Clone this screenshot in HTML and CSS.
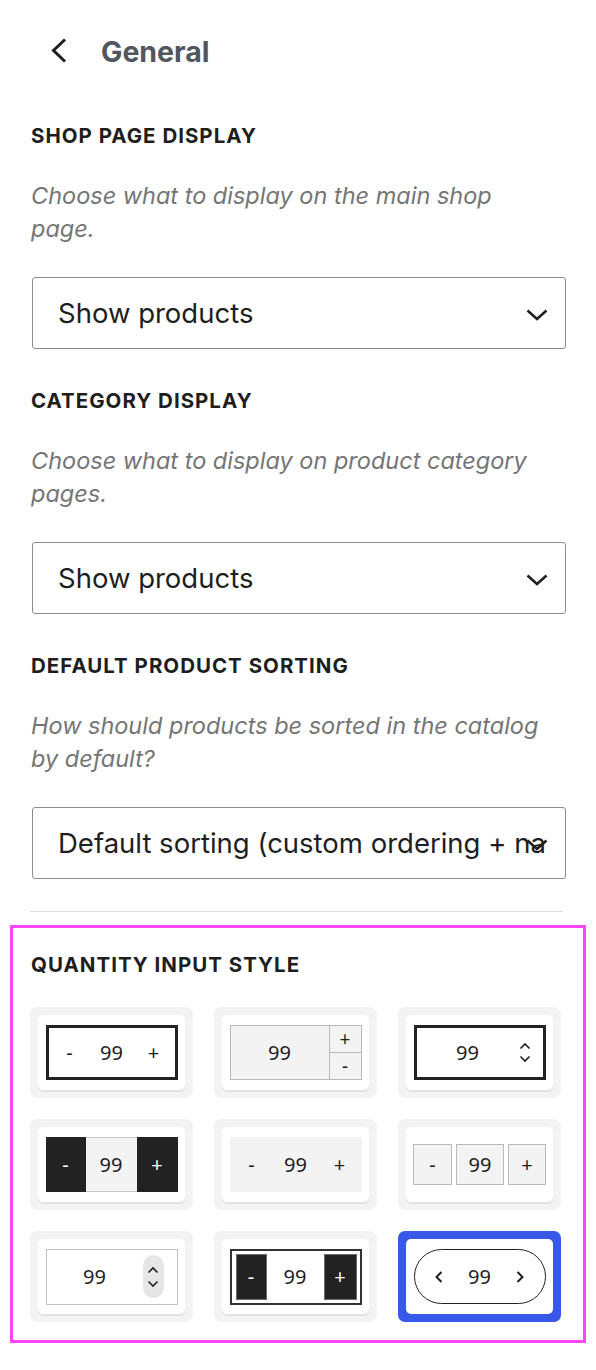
FILE: index.html
```html
<!DOCTYPE html>
<html lang="en">
<head>
<meta charset="utf-8">
<title>General</title>
<link rel="stylesheet" href="styles.css">
</head>
<body>
<div class="panel">
  <header class="head">
    <svg class="back" width="20" height="28" viewBox="0 0 20 28" aria-hidden="true"><path d="M15 2.5 L3.5 13.5 L15 24.5" fill="none" stroke="#1e1e1e" stroke-width="3"/></svg>
    <h1 class="title">General</h1>
  </header>

  <section class="field">
    <h2 class="label">Shop page display</h2>
    <p class="desc">Choose what to display on the main shop page.</p>
    <div class="select"><span class="select-text">Show products</span>
      <svg class="caret" width="22" height="14" viewBox="0 0 22 14" aria-hidden="true"><path d="M1.5 2.5 L11 11 L20.5 2.5" fill="none" stroke="#1e1e1e" stroke-width="2.5"/></svg>
    </div>
  </section>

  <section class="field">
    <h2 class="label">Category display</h2>
    <p class="desc">Choose what to display on product category pages.</p>
    <div class="select"><span class="select-text">Show products</span>
      <svg class="caret" width="22" height="14" viewBox="0 0 22 14" aria-hidden="true"><path d="M1.5 2.5 L11 11 L20.5 2.5" fill="none" stroke="#1e1e1e" stroke-width="2.5"/></svg>
    </div>
  </section>

  <section class="field">
    <h2 class="label">Default product sorting</h2>
    <p class="desc">How should products be sorted in the catalog by default?</p>
    <div class="select"><span class="select-text">Default sorting (custom ordering + name)</span>
      <svg class="caret" width="22" height="14" viewBox="0 0 22 14" aria-hidden="true"><path d="M1.5 2.5 L11 11 L20.5 2.5" fill="none" stroke="#1e1e1e" stroke-width="2.5"/></svg>
    </div>
  </section>

  <hr class="divider">

  <section class="qty-box">
    <h2 class="label qty-label">Quantity input style</h2>
    <div class="tiles">
      <div class="tile"><div class="card">
        <div class="q q1"><span class="c">-</span><span class="c">99</span><span class="c">+</span></div>
      </div></div>

      <div class="tile"><div class="card">
        <div class="q q2"><span class="q2-val">99</span><span class="q2-btns"><span class="q2-b">+</span><span class="q2-b q2-bot">-</span></span></div>
      </div></div>

      <div class="tile"><div class="card">
        <div class="q q3"><span class="q3-val">99</span><span class="arrows">
          <svg width="12" height="8" viewBox="0 0 12 8"><path d="M1.5 6.5 L6 2 L10.5 6.5" fill="none" stroke="#1e1e1e" stroke-width="1.6"/></svg>
          <svg width="12" height="8" viewBox="0 0 12 8"><path d="M1.5 1.5 L6 6 L10.5 1.5" fill="none" stroke="#1e1e1e" stroke-width="1.6"/></svg>
        </span></div>
      </div></div>

      <div class="tile"><div class="card">
        <div class="q q4"><span class="dark w40">-</span><span class="q4-val">99</span><span class="dark w41">+</span></div>
      </div></div>

      <div class="tile"><div class="card">
        <div class="q q5"><span class="c">-</span><span class="c">99</span><span class="c">+</span></div>
      </div></div>

      <div class="tile"><div class="card">
        <div class="q6"><span class="box b39">-</span><span class="box b48">99</span><span class="box b38">+</span></div>
      </div></div>

      <div class="tile"><div class="card">
        <div class="q q7"><span class="q7-val">99</span><span class="pill">
          <svg width="12" height="8" viewBox="0 0 12 8"><path d="M1.5 6.5 L6 2 L10.5 6.5" fill="none" stroke="#1e1e1e" stroke-width="1.6"/></svg>
          <svg width="12" height="8" viewBox="0 0 12 8"><path d="M1.5 1.5 L6 6 L10.5 1.5" fill="none" stroke="#1e1e1e" stroke-width="1.6"/></svg>
        </span></div>
      </div></div>

      <div class="tile"><div class="card">
        <div class="q q8"><span class="dark w31">-</span><span class="q8-val">99</span><span class="dark w33">+</span></div>
      </div></div>

      <div class="tile tile-active"><div class="card card-active">
        <div class="q q9">
          <svg class="q9-arrow" width="10" height="14" viewBox="0 0 10 14"><path d="M7.5 2 L2.5 7 L7.5 12" fill="none" stroke="#1e1e1e" stroke-width="2"/></svg>
          <span class="q9-val">99</span>
          <svg class="q9-arrow" width="10" height="14" viewBox="0 0 10 14"><path d="M2.5 2 L7.5 7 L2.5 12" fill="none" stroke="#1e1e1e" stroke-width="2"/></svg>
        </div>
      </div></div>
    </div>
  </section>
</div>
</body>
</html>
```

FILE: styles.css
```css
html, body {
  margin: 0;
  padding: 0;
  background: #ffffff;
}

body {
  font-family: Inter, "Noto Sans", "Liberation Sans", sans-serif;
  color: #1e1e1e;
}

.panel {
  width: 535px;
  padding: 0 30px 30px 31px;
}

/* header */
.head {
  display: flex;
  align-items: center;
  height: 50px;
  padding-top: 26px;
}

.back {
  margin-left: 19px;
  flex: none;
}

.title {
  margin: 0 0 0 31px;
  font-size: 28.5px;
  font-weight: 700;
  color: #50575e;
}

/* fields */
.field {
  margin-top: 40px;
}

.head + .field {
  margin-top: 48px;
}

.label {
  margin: 0;
  font-size: 20.5px;
  line-height: 24px;
  font-weight: 700;
  letter-spacing: 1px;
  text-transform: uppercase;
  color: #1e1e1e;
}

.desc {
  margin: 31px 0 32px;
  padding-right: 15px;
  font-size: 23.5px;
  line-height: 33px;
  font-style: italic;
  color: #757575;
}

.select {
  position: relative;
  box-sizing: border-box;
  height: 72px;
  margin-left: 1px;
  border: 1px solid #8c8c8c;
  border-radius: 3px;
  display: flex;
  align-items: center;
  padding: 0 20px 0 25px;
  overflow: hidden;
}

.select-text {
  font-size: 27.5px;
  white-space: nowrap;
  overflow: hidden;
  color: #1e1e1e;
}

.caret {
  position: absolute;
  right: 17px;
  top: 30px;
}

.divider {
  margin: 32px 0 0 -1px;
  width: 533px;
  border: 0;
  border-top: 1px solid #dcdcdc;
  height: 0;
}

/* quantity box */
.qty-box {
  margin: 13px 0 0 -21px;
  width: 576px;
  box-sizing: border-box;
  border: 3px solid #ff44fa;
  padding: 25px 22px 18px 17px;
}

.qty-label {
  margin-left: 1px;
}

.tiles {
  margin-top: 30px;
  display: grid;
  grid-template-columns: repeat(3, 163px);
  grid-auto-rows: 91px;
  gap: 21px;
}

.tile {
  background: #f3f3f3;
  border-radius: 7px;
  padding: 8px;
  box-sizing: border-box;
  display: flex;
}

.tile-active {
  background: #3858e9;
}

.card {
  flex: 1;
  background: #ffffff;
  border-radius: 5px;
  box-shadow: 0 2px 0 #e3e3e3;
  display: flex;
  align-items: center;
  justify-content: center;
}

.card-active {
  box-shadow: none;
}

.q {
  box-sizing: border-box;
  width: 132px;
  height: 55px;
  display: flex;
  align-items: center;
  font-family: "Noto Sans", "DejaVu Sans", sans-serif;
  font-size: 20px;
  color: #1e1e1e;
}

.c {
  flex: 1;
  text-align: center;
}

/* 1 */
.q1 {
  border: 3px solid #222222;
}

/* 2 */
.q2 {
  border: 1px solid #b9b9b9;
  background: #f3f3f3;
  align-items: stretch;
}

.q2-val {
  flex: 1;
  display: flex;
  align-items: center;
  justify-content: center;
  border-right: 1px solid #b9b9b9;
}

.q2-btns {
  width: 31px;
  display: flex;
  flex-direction: column;
}

.q2-b {
  flex: 1;
  display: flex;
  align-items: center;
  justify-content: center;
  font-size: 19px;
}

.q2-bot {
  border-top: 1px solid #b9b9b9;
}

/* 3 */
.q3 {
  border: 3px solid #222222;
  padding-right: 12px;
}

.q3-val {
  flex: 1;
  text-align: center;
}

.arrows {
  width: 12px;
  display: flex;
  flex-direction: column;
  gap: 5px;
}

/* 4 */
.q4 {
  align-items: stretch;
}

.dark {
  background: #222222;
  color: #ffffff;
  display: flex;
  align-items: center;
  justify-content: center;
}

.w40 { width: 40px; }
.w41 { width: 41px; }
.w31 { width: 31px; }
.w33 { width: 33px; }

.q4-val {
  flex: 1;
  background: #f3f3f3;
  display: flex;
  align-items: center;
  justify-content: center;
  border-top: 1px solid #c9c9c9;
  border-bottom: 1px solid #c9c9c9;
}

/* 5 */
.q5 {
  background: #f3f3f3;
}

/* 6 */
.q6 {
  display: flex;
  gap: 4px;
  font-family: "Noto Sans", "DejaVu Sans", sans-serif;
  font-size: 20px;
}

.box {
  box-sizing: border-box;
  height: 41px;
  background: #f3f3f3;
  border: 1px solid #b9b9b9;
  display: flex;
  align-items: center;
  justify-content: center;
}

.b39 { width: 39px; }
.b48 { width: 48px; }
.b38 { width: 38px; }

/* 7 */
.q7 {
  height: 56px;
  border: 1px solid #c4c4c4;
  padding-right: 13px;
}

.q7-val {
  flex: 1;
  text-align: center;
}

.pill {
  width: 21px;
  height: 43px;
  border-radius: 11px;
  background: #e6e6e6;
  display: flex;
  flex-direction: column;
  align-items: center;
  justify-content: center;
  gap: 6px;
}

/* 8 */
.q8 {
  height: 56px;
  border: 2px solid #333333;
  padding: 3px 3px 3px 4px;
  align-items: stretch;
}

.q8 .dark {
  box-shadow: inset 0 0 0 1px #6b6b6b;
}

.q8-val {
  flex: 1;
  display: flex;
  align-items: center;
  justify-content: center;
}

/* 9 */
.q9 {
  border: 1.5px solid #222222;
  border-radius: 28px;
  padding: 0 19px;
  justify-content: space-between;
}

.q9-arrow {
  flex: none;
}

.q9-val {
  text-align: center;
}
```
